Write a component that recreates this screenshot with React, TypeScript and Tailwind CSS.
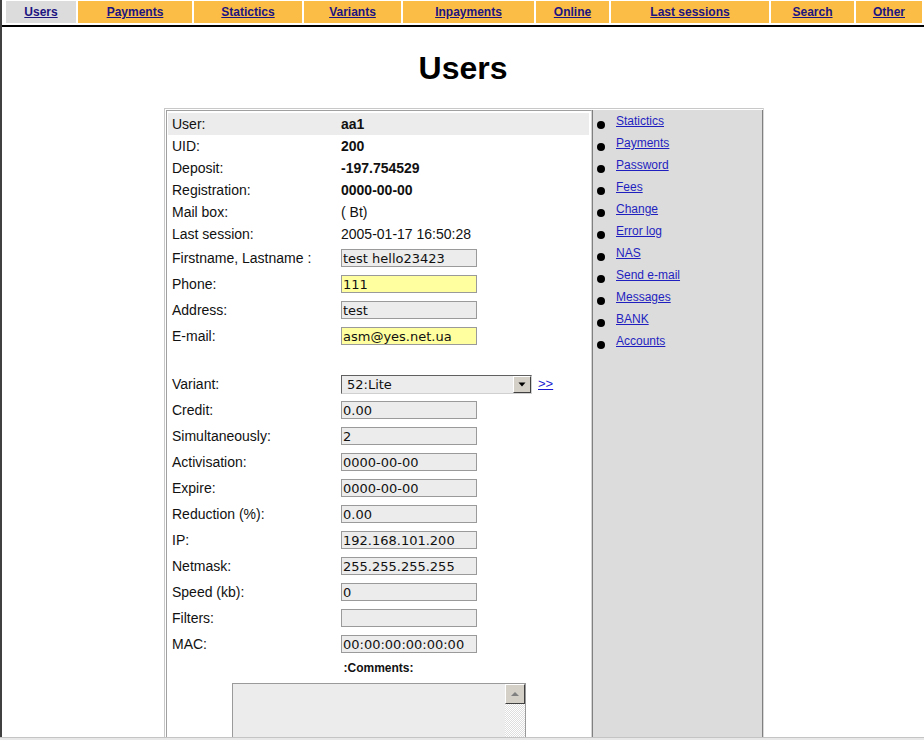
import React from "react";

const navItems = [
  { label: "Users", w: "w-[70px]", active: true },
  { label: "Payments", w: "w-[114px]" },
  { label: "Statictics", w: "w-[108px]" },
  { label: "Variants", w: "w-[97px]" },
  { label: "Inpayments", w: "w-[131px]" },
  { label: "Online", w: "w-[73px]" },
  { label: "Last sessions", w: "w-[158px]" },
  { label: "Search", w: "w-[83px]" },
  { label: "Other", w: "w-[66px]" },
];

const infoRows = [
  { label: "User:", value: "aa1", bold: true, shaded: true },
  { label: "UID:", value: "200", bold: true },
  { label: "Deposit:", value: "-197.754529", bold: true },
  { label: "Registration:", value: "0000-00-00", bold: true },
  { label: "Mail box:", value: "( Bt)" },
  { label: "Last session:", value: "2005-01-17 16:50:28" },
];

const contactRows = [
  { label: "Firstname, Lastname :", value: "test hello23423" },
  { label: "Phone:", value: "111", yellow: true },
  { label: "Address:", value: "test" },
  { label: "E-mail:", value: "asm@yes.net.ua", yellow: true },
];

const serviceRows = [
  { label: "Credit:", value: "0.00" },
  { label: "Simultaneously:", value: "2" },
  { label: "Activisation:", value: "0000-00-00" },
  { label: "Expire:", value: "0000-00-00" },
  { label: "Reduction (%):", value: "0.00" },
  { label: "IP:", value: "192.168.101.200" },
  { label: "Netmask:", value: "255.255.255.255" },
  { label: "Speed (kb):", value: "0" },
  { label: "Filters:", value: "" },
  { label: "MAC:", value: "00:00:00:00:00:00" },
];

const menuLinks = [
  "Statictics",
  "Payments",
  "Password",
  "Fees",
  "Change",
  "Error log",
  "NAS",
  "Send e-mail",
  "Messages",
  "BANK",
  "Accounts",
];

const Field: React.FC<{ value: string; yellow?: boolean }> = ({ value, yellow }) => (
  <input
    readOnly
    defaultValue={value}
    className={`w-[136px] h-[18px] border border-[#9a9a9a] pl-[1px] text-[13px] leading-[16px] text-[#111] outline-none font-['DejaVu_Sans',sans-serif] ${
      yellow ? "bg-[#ffffa0]" : "bg-[#ececec]"
    }`}
  />
);

const InputRow: React.FC<{ label: string; value: string; yellow?: boolean }> = ({ label, value, yellow }) => (
  <div className="grid grid-cols-[173px_1fr] h-[26px] items-center">
    <span className="pl-[4px]">{label}</span>
    <div>
      <Field value={value} yellow={yellow} />
    </div>
  </div>
);

export default function App() {
  return (
    <div className="h-[740px] flex flex-col overflow-hidden bg-white font-['Liberation_Sans',Arial,sans-serif] text-[#111]">
      <div className="flex-1 min-h-0 overflow-hidden border-l-2 border-[#404040]">
        {/* top menu */}
        <div className="flex gap-[2px] pl-[4px] pt-[1px] pb-[2px]">
          {navItems.map((item) => (
            <div
              key={item.label}
              className={`${item.w} h-[22px] flex items-center justify-center ${
                item.active ? "bg-[#dcdcdc]" : "bg-[#fbbd45]"
              }`}
            >
              <a href="#" className="text-[12px] font-bold text-[#1c1480] underline">
                {item.label}
              </a>
            </div>
          ))}
        </div>
        <div className="h-[2px] bg-black" />

        <h1 className="mt-[23px] mb-[21px] text-center text-[32px] leading-[37px] font-bold text-black">Users</h1>

        {/* main table */}
        <div className="pl-[2px]">
          <div className="w-[600px] mx-auto flex border-l border-t border-[#c8c8c8] pl-[1px] pt-[1px] border-r border-r-[#d8d8d8]">
            {/* form cell */}
            <div className="w-[426px] border-l border-t border-[#a0a0a0] border-r border-r-[#d4d4d4] pl-[1px] pr-[2px] pt-[2px] text-[14px]">
              {infoRows.map((r) => (
                <div
                  key={r.label}
                  className={`grid grid-cols-[173px_1fr] h-[22px] items-center ${r.shaded ? "bg-[#ececec]" : ""}`}
                >
                  <span className="pl-[4px]">{r.label}</span>
                  <span className={r.bold ? "font-bold" : ""}>{r.value}</span>
                </div>
              ))}

              {contactRows.map((r) => (
                <InputRow key={r.label} {...r} />
              ))}

              <div className="h-[22px]" />

              <div className="grid grid-cols-[173px_1fr] h-[26px] items-center">
                <span className="pl-[4px]">Variant:</span>
                <div className="flex items-center gap-[6px]">
                  <div className="w-[191px] h-[19px] flex border border-t-[#606060] border-l-[#606060] border-r-[#d0d0d0] border-b-[#d0d0d0] bg-[#ececec]">
                    <span className="flex-1 pl-[5px] text-[13px] leading-[17px] font-['DejaVu_Sans',sans-serif]">
                      52:Lite
                    </span>
                    <div className="w-[18px] h-full flex items-center justify-center bg-[#d4d0c8] border border-t-white border-l-white border-r-[#404040] border-b-[#404040]">
                      <svg width="8" height="5" viewBox="0 0 8 5">
                        <path d="M0.5 0.5h7L4 4.5z" fill="#000" />
                      </svg>
                    </div>
                  </div>
                  <a href="#" className="text-[13px] text-[#1a1ad0] underline">
                    &gt;&gt;
                  </a>
                </div>
              </div>

              {serviceRows.map((r) => (
                <InputRow key={r.label} label={r.label} value={r.value} />
              ))}

              <div className="h-[22px] flex items-center justify-center">
                <span className="text-[12px] font-bold">:Comments:</span>
              </div>

              <div className="flex justify-center pt-[4px]">
                <div className="w-[294px] h-[120px] flex border border-[#9a9a9a] bg-[#ececec]">
                  <div className="flex-1" />
                  <div className="w-[20px] flex flex-col bg-[#f0f0f0]">
                    <div className="h-[20px] flex items-center justify-center bg-[#d4d0c8] border border-t-white border-l-white border-r-[#404040] border-b-[#404040]">
                      <svg width="10" height="6" viewBox="0 0 10 6">
                        <path d="M1 5h8L5 1z" fill="#808080" />
                      </svg>
                    </div>
                    <div className="flex-1 bg-[repeating-conic-gradient(#ffffff_0_25%,#dedede_0_50%)] bg-[length:2px_2px]" />
                  </div>
                </div>
              </div>
            </div>

            {/* menu cell */}
            <div className="w-[171px] border-l border-r border-[#808080] bg-[#dcdcdc] pt-[3px]">
              {menuLinks.map((l) => (
                <div key={l} className="h-[22px] flex items-start">
                  <span className="mt-[8px] ml-[4px] w-[8px] h-[8px] rounded-full bg-black shrink-0" />
                  <a href="#" className="ml-[11px] mt-[1px] text-[12px] leading-[14px] text-[#1f1fbf] underline">
                    {l}
                  </a>
                </div>
              ))}
            </div>
          </div>
        </div>
      </div>
      <div className="h-[1px] bg-[#c4c4c4]" />
      <div className="h-[2px] bg-[#e8e8e8]" />
    </div>
  );
}
